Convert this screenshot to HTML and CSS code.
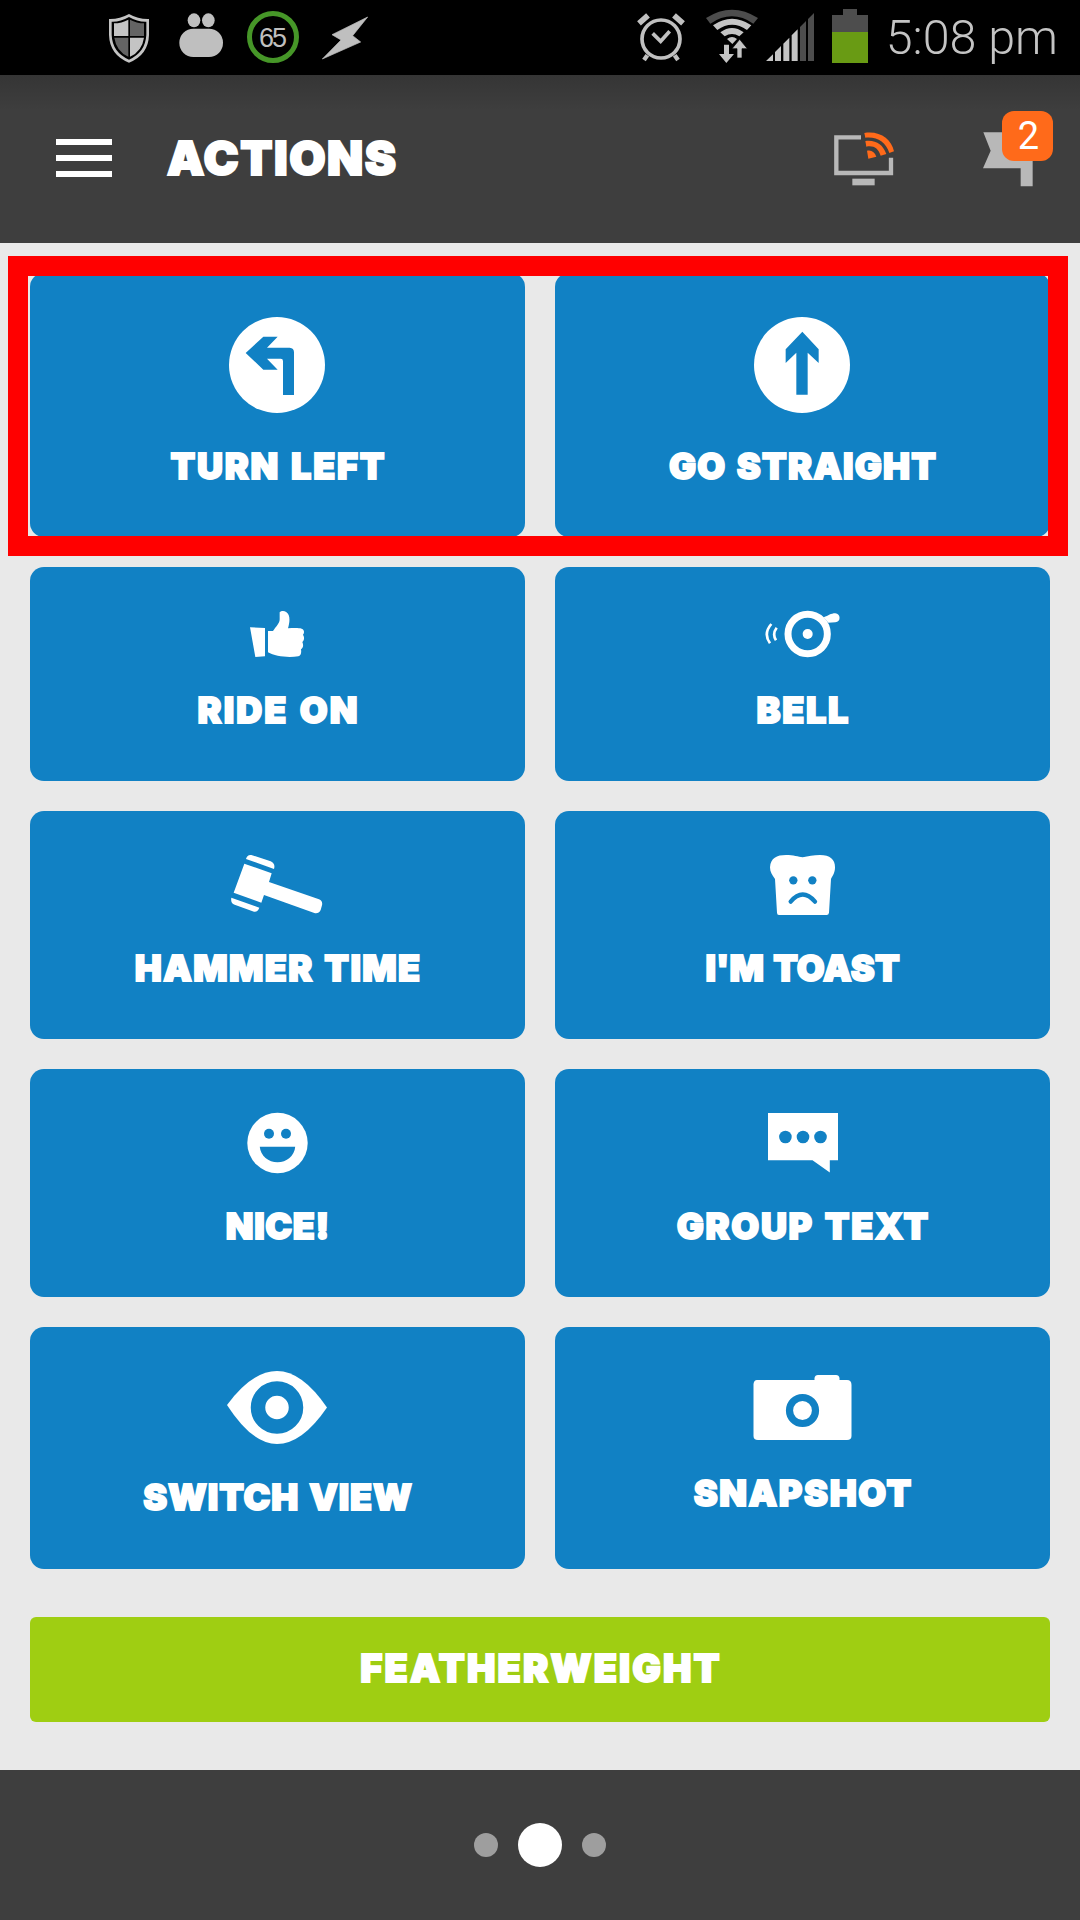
FILE: index.html
```html
<!DOCTYPE html>
<html lang="en">
<head>
<meta charset="utf-8">
<title>Actions</title>
<link rel="stylesheet" href="styles.css">
</head>
<body>
<div class="statusbar">
  <div class="notices">
    <svg width="40" height="50" viewBox="57 42 120 150"><path d="M117 42Q145 58 177 57V105Q175 165 117 188Q59 165 57 105V57Q88 58 117 42Z" fill="#c4c4c4"/><path d="M117 51Q143 66 169 65V105Q166 157 117 179Q67 157 65 105V65Q91 66 117 51Z" fill="#000"/><path d="M115 59V108H72V70Q95 70 115 59ZM120 113H162Q156 154 120 170Z" fill="#c4c4c4"/><path d="M120 59Q140 70 162 70V108H120ZM115 113V170Q79 154 73 113Z" fill="#646464"/></svg>
    <svg width="44" height="46" viewBox="267 40 132 138" fill="#bfbfbf"><ellipse cx="312" cy="62" rx="19" ry="21"/><ellipse cx="355" cy="62" rx="19" ry="21"/><rect x="268" y="87" width="131" height="85" rx="42"/></svg>
    <div class="level">65</div>
    <svg width="46" height="46" viewBox="697 48 138 138" fill="#bfbfbf"><path d="M834 51L727 104L754 120L698 177L813 126L789 107Z" stroke="#bfbfbf" stroke-width="2"/></svg>
  </div>
  <div class="system">
    <svg class="alarm" width="48" height="50" viewBox="51 39 144 150"><g fill="none" stroke="#c0c0c0"><circle cx="123" cy="117" r="57" stroke-width="11"/><path d="M98 100L122 124L149 94" stroke-width="11"/><path d="M82 166L72 180M164 166L174 180" stroke-width="13"/><path d="M57 70L84 46M189 70L162 46" stroke-width="17"/></g></svg>
    <svg class="wifi" width="52" height="54" viewBox="258 28 156 162"><path d="M258 55Q336 5 414 55L400 72Q336 28 271 72Z" fill="#4d4d4d"/><path d="M279 77Q336 38 394 77L381 91Q336 60 292 91ZM301 98Q336 72 371 98L358 110Q336 96 314 110ZM321 118Q336 106 351 118L337 133Z" fill="#c4c4c4"/><path d="M312 135H327V163H342L319 190L297 163H312Z" fill="#c4c4c4"/><path d="M351 175H366V147H382L359 119L336 147H351Z" fill="#c4c4c4" stroke="#000" stroke-width="2"/></svg>
    <svg class="signal" width="48" height="48" viewBox="438 39 144 144"><path d="M438 183L459 163V183ZM465 183V156L483 138V183ZM490 183V131L508 113V183ZM515 183V106L533 88V183Z" fill="#c4c4c4"/><path d="M540 183V81L558 63V183ZM564 183V57L582 39V183Z" fill="#4d4d4d"/></svg>
    <svg class="battery" width="36" height="54" viewBox="0 0 36 54"><path d="M11 0H25V6H36V23H0V6H11Z" fill="#4d4d4d"/><path d="M0 23H36V54H0Z" fill="#699b14"/></svg>
    <span class="clock">5:08 pm</span>
  </div>
</div>

<header class="appbar">
  <svg width="56" height="38" viewBox="0 0 56 38" fill="#fff"><path d="M0 0H56V6H0ZM0 16H56V22H0ZM0 32H56V38H0Z"/></svg>
  <h1 class="title">ACTIONS</h1>
  <svg class="cast" width="60" height="54" viewBox="162 157 180 162"><path d="M243 173H169V280H333V234" fill="none" stroke="#b8b8b8" stroke-width="13"/><path d="M217 297H284V317H217Z" fill="#b8b8b8"/><path d="M253 160C300 153 334 178 342 215L328 220C318 187 291 170 256 174ZM256 184C288 180 309 195 319 223L302 228C295 206 281 197 259 201ZM261 213C275 210 284 217 289 231L265 237Z" fill="#ff6a1a"/></svg>
  <div class="flag">
    <svg width="50" height="55" viewBox="610 155 150 165" fill="#b8b8b8"><path d="M611 156H759V318H723V264H610L633 211Z"/></svg>
    <span class="badge">2</span>
  </div>
</header>

<main class="content">
  <div class="grid">
    <button class="tile">
      <svg class="even" width="96" height="96" viewBox="267 81 288 288"><circle cx="411" cy="225" r="144" fill="#fff"/><path d="M317 189L370 140H413L381 173H449Q462 174 462 187V315H429V213Q429 206 422 206H381L413 239H370Z" fill="#1181c4"/></svg>
      <span class="label turn">TURN LEFT</span>
    </button>
    <button class="tile">
      <svg class="even" width="96" height="96" viewBox="342 81 288 288"><circle cx="486" cy="225" r="144" fill="#fff"/><path d="M487 125L536 178V219L503 188V314H469V188L437 219V178Z" fill="#1181c4"/></svg>
      <span class="label straight">GO STRAIGHT</span>
    </button>
    <button class="tile">
      <svg class="even" width="54" height="46" viewBox="240 63 162 138" fill="#fff"><path d="M240 112L285 114V199L256 201ZM294 123H309C318 108 330 100 329 85V67C335 60 350 61 356 75C361 88 357 103 354 115C370 114 385 113 395 116C403 119 404 128 399 134C404 141 403 151 397 156C401 165 400 173 393 178C395 190 392 198 385 199C355 203 315 200 294 187Z"/></svg>
      <span class="label ride">RIDE ON</span>
    </button>
    <button class="tile">
      <svg width="74" height="46" viewBox="196 63 222 138"><g fill="none" stroke="#fff"><circle cx="321" cy="132" r="59" stroke-width="21"/><path d="M212 102Q187 131 208 160M228 113Q214 132 226 151" stroke-width="8"/></g><circle cx="321" cy="132" r="15" fill="#fff"/><path d="M369 82C384 77 390 70 404 70C420 70 422 97 404 97L383 98Z" fill="#fff"/></svg>
      <span class="label bell">BELL</span>
    </button>
    <button class="tile">
      <svg width="93" height="60" viewBox="333 75 279 180" fill="#fff"><path d="M378 87Q382 73 394 75L452 94Q467 101 462 117ZM373 101L455 130L447 156L597 208Q609 213 606 226L602 240Q596 252 583 249L432 195L424 218L341 188ZM334 203L418 233Q413 247 402 245L344 224Q331 220 334 203Z"/></svg>
      <span class="label hammer">HAMMER TIME</span>
    </button>
    <button class="tile">
      <svg width="65" height="60" viewBox="270 75 195 180"><path d="M270 112C272 84 290 75 318 75C340 75 355 80 368 82C385 78 400 75 420 75C450 75 465 88 465 112C465 128 459 136 453 147L447 248Q446 255 440 255H297Q291 255 291 248L285 147C276 135 270 126 270 112Z" fill="#fff"/><g fill="#1181c4"><circle cx="340" cy="151" r="12.5"/><circle cx="397" cy="151" r="12.5"/></g><path d="M332 215Q368 172 405 215" fill="none" stroke="#1181c4" stroke-width="13" stroke-linecap="round"/></svg>
      <span class="label toast">I'M TOAST</span>
    </button>
    <button class="tile">
      <svg width="61" height="60" viewBox="-.5 0 61 60"><circle cx="30" cy="30" r="30.2" fill="#fff"/><path d="M12.3 33.7H47.7C47 43 39 49.3 30 49.3S13 43 12.3 33.7Z" fill="#1181c4"/><circle cx="21.5" cy="20.7" r="5" fill="#1181c4"/><circle cx="38.5" cy="20.7" r="5" fill="#1181c4"/></svg>
      <span class="label nice">NICE!</span>
    </button>
    <button class="tile">
      <svg width="70" height="60" viewBox="0 0 70 60"><path d="M0 0H70V47.3H61.8V59.5L44.5 47.3H0Z" fill="#fff"/><g fill="#1181c4"><circle cx="17.4" cy="24" r="6.3"/><circle cx="35" cy="24" r="6.3"/><circle cx="52.5" cy="24" r="6.3"/></g></svg>
      <span class="label group">GROUP TEXT</span>
    </button>
    <button class="tile">
      <svg class="even" width="100" height="73" viewBox="0 0 100 73"><path d="M0 34Q25 0 50 0T100 36.5Q75 73 50 73T0 34Z" fill="#fff"/><circle cx="50" cy="36.5" r="19" fill="none" stroke="#1181c4" stroke-width="14.5"/></svg>
      <span class="label switch">SWITCH VIEW</span>
    </button>
    <button class="tile">
      <svg width="99" height="69" viewBox="0 0 99 69"><path d="M4 9H61.5V7Q62 4 65 4H83Q86 4 86.5 7V9H94Q98.5 9 98.5 14V65Q98.5 69 94 69H5Q.5 69 .5 65V13Q1 9 4 9Z" fill="#fff"/><circle cx="49.5" cy="39.5" r="13" fill="none" stroke="#1181c4" stroke-width="7.2"/></svg>
      <span class="label snap">SNAPSHOT</span>
    </button>
  </div>
  <button class="ride-name"><span class="label feather">FEATHERWEIGHT</span></button>
  <div class="highlight"></div>
</main>

<footer class="pager"><i class="dot"></i><i class="dot current"></i><i class="dot"></i></footer>
</body>
</html>
```
FILE: styles.css
```css
* { box-sizing: border-box; }
body {
  margin: 0;
  width: 1080px;
  height: 1920px;
  display: flex;
  flex-direction: column;
  background: #e9e9e9;
  font-family: Inter, "Liberation Sans", sans-serif;
}
svg { display: block; flex: none; overflow: visible; }

.statusbar {
  height: 75px;
  background: #000;
  display: flex;
  justify-content: space-between;
  padding: 0 22px 0 109px;
}
.notices { display: flex; align-items: flex-start; padding-top: 14px; }
.notices svg + svg { margin-left: 30px; margin-top: -1px; }
.level {
  width: 52px;
  height: 52px;
  margin: -3px 23px 0 24px;
  border: 5px solid #469628;
  border-radius: 50%;
  color: #bfbfbf;
  font: 27px/44px "Liberation Sans", sans-serif;
  letter-spacing: -2px;
  text-indent: -2px;
  text-align: center;
}
.notices .level + svg { margin-top: 2px; }
.system { display: flex; align-items: flex-start; }
.alarm { margin: 13px 21px 0 0; }
.wifi { margin: 9px 8px 0 0; }
.signal { margin: 13px 18px 0 0; }
.battery { margin: 9px 18px 0 0; }
.clock {
  font: 300 48.4px/58px Roboto, sans-serif;
  color: #c4c4c4;
  margin-top: 9px;
}

.appbar {
  height: 168px;
  background: linear-gradient(#353535, #3e3e3e 35px);
  display: flex;
  align-items: center;
  padding: 0 27px 2px 56px;
}
.title {
  margin: 0 0 0 55px;
  flex: 1;
  font-size: 47px;
  font-weight: 900;
  line-height: 60px;
  letter-spacing: 1.5px;
  -webkit-text-stroke: 2px #fff;
  color: #fff;
}
.cast { margin: 2px 89px 0 0; }
.flag { position: relative; width: 70px; margin-top: 2px; }
.badge {
  position: absolute;
  left: 19px;
  top: -21px;
  width: 51px;
  height: 50px;
  padding-left: 2px;
  border-radius: 12px;
  background: #ff6a1a;
  color: #fff;
  font: 38px/51px Roboto, sans-serif;
  text-align: center;
}

.content {
  position: relative;
  flex: 1;
  padding: 30px;
}
.grid {
  display: grid;
  grid-template-columns: 1fr 1fr;
  grid-template-rows: repeat(4, auto) 242px;
  gap: 30px;
}
.tile {
  display: flex;
  flex-direction: column;
  align-items: center;
  justify-content: flex-start;
  padding: 44px 0 49px;
  border: 0;
  border-radius: 14px;
  background: #1181c4;
}
.even { margin-right: 1px; }
.label {
  --track: 0px;
  color: #fff;
  font: 900 36px/44px Inter, "Liberation Sans", sans-serif;
  letter-spacing: var(--track);
  margin-right: calc(-1 * var(--track));
  word-spacing: 2px;
  -webkit-text-stroke: 1.8px #fff;
  white-space: nowrap;
}
.tile .label { margin-top: 31px; }
.turn { --track: 1.8px; }
.straight { --track: 1.2px; }
.ride { --track: 2.1px; }
.bell { --track: 1.7px; }
.hammer { --track: 1.4px; }
.toast { --track: .1px; }
.nice { --track: .6px; }
.group { --track: 1.7px; }
.switch { --track: .86px; }
.snap { --track: 1.6px; }
.feather { --track: 2.1px; font-size: 38px; padding-bottom: 3px; }
.ride-name {
  display: flex;
  justify-content: center;
  align-items: center;
  width: 100%;
  height: 105px;
  margin-top: 48px;
  padding: 0;
  border: 0;
  border-radius: 6px;
  background: #9fce12;
}
.highlight {
  position: absolute;
  left: 8px;
  top: 13px;
  width: 1060px;
  height: 300px;
  border: 20px solid #f00;
}

.pager {
  height: 150px;
  background: #3e3e3e;
  display: flex;
  justify-content: center;
  align-items: center;
  gap: 20px;
}
.dot { width: 24px; height: 24px; border-radius: 50%; background: #9e9e9e; }
.current { width: 44px; height: 44px; background: #fff; }
```
